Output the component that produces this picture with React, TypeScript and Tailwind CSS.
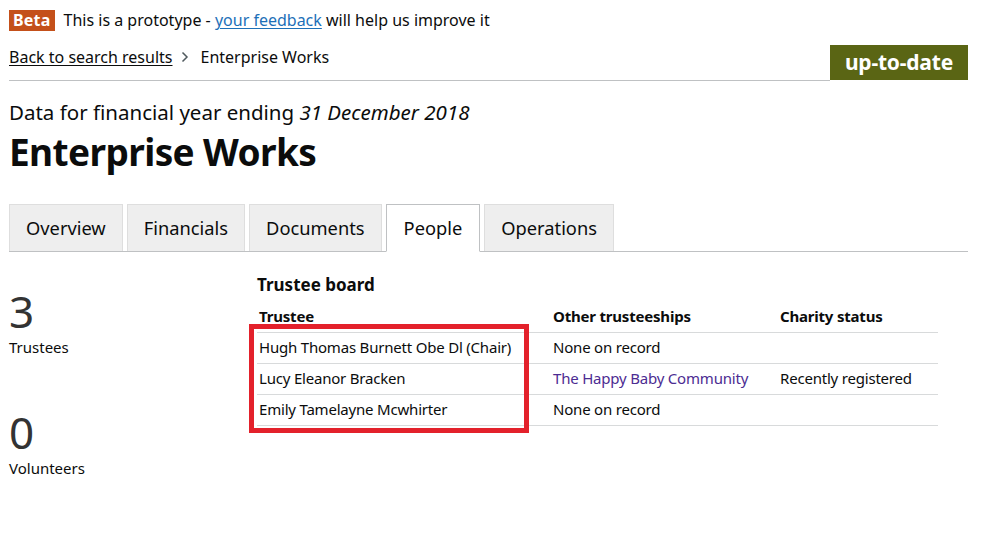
const font = { fontFamily: '"Noto Sans", "Liberation Sans", Arial, sans-serif' };

const TABS = ['Overview', 'Financials', 'Documents', 'People', 'Operations'];

const TRUSTEES = [
  { name: 'Hugh Thomas Burnett Obe Dl (Chair)', other: 'None on record', link: false, status: '' },
  { name: 'Lucy Eleanor Bracken', other: 'The Happy Baby Community', link: true, status: 'Recently registered' },
  { name: 'Emily Tamelayne Mcwhirter', other: 'None on record', link: false, status: '' },
];

export default function App() {
  return (
    <div className="w-[1001px] h-[546px] bg-white text-[#0b0c0c] overflow-hidden" style={font}>
      <div className="ml-[9px] w-[959px]">
        {/* Phase banner */}
        <div className="pt-[10px] flex items-center gap-[9px] text-[16px] leading-[21px]">
          <span className="bg-[#c4501a] text-white font-bold px-[4px] h-[21px] leading-[21px] tracking-[0.2px]">Beta</span>
          <span>
            This is a prototype -{' '}
            <a href="#" className="text-[#1d70b8] underline underline-offset-2">your feedback</a> will help us improve it
          </span>
        </div>

        {/* Breadcrumb + status */}
        <div className="flex items-end mt-[14px]">
          <div className="flex-1 border-b border-[#bfc1c3] pb-[11px] flex items-center text-[16px] leading-[24px]">
            <a href="#" className="underline underline-offset-2 text-[#0b0c0c]">Back to search results</a>
            <svg width="10" height="12" viewBox="0 0 10 12" className="ml-[7px] mr-[11px]">
              <path d="M2.5 1.5 L7 6 L2.5 10.5" stroke="#505a5f" strokeWidth="1.5" fill="none" />
            </svg>
            <span>Enterprise Works</span>
          </div>
          <div className="bg-[#5a6514] text-white font-bold text-[21px] leading-[35px] h-[35px] px-[15px] mb-[1px] tracking-[-0.2px]">
            up-to-date
          </div>
        </div>

        {/* Heading */}
        <p className="mt-[18px] text-[20.5px] leading-[26px]">
          Data for financial year ending <i>31 December 2018</i>
        </p>
        <h1 className="mt-[5px] text-[37px] leading-[44px] font-bold tracking-[-0.6px]">Enterprise Works</h1>

        {/* Tabs */}
        <div className="mt-[30px] flex border-b border-[#bfc1c3]">
          {TABS.map((t) => {
            const active = t === 'People';
            return (
              <div
                key={t}
                className={
                  active
                    ? 'h-[48px] -mb-px mr-[4px] px-[17px] flex items-center bg-white border border-[#bfc1c3] border-b-white text-[18.3px]'
                    : 'h-[47px] mr-[4px] px-[16px] flex items-center bg-[#eeeeee] border border-[#dedede] border-b-0 text-[18.3px]'
                }
              >
                {t}
              </div>
            );
          })}
        </div>

        {/* Content */}
        <div className="flex mt-[21px]">
          <div className="w-[248px] shrink-0 pt-[16px]">
            <div className="text-[44px] leading-[44px] text-[#333]">3</div>
            <div className="text-[15px] leading-[20px] mt-[4px]">Trustees</div>
            <div className="text-[44px] leading-[44px] text-[#333] mt-[53px]">0</div>
            <div className="text-[15px] leading-[20px] mt-[4px]">Volunteers</div>
          </div>

          <div className="relative w-[681px]">
            <h2 className="text-[17px] leading-[24px] font-bold">Trustee board</h2>
            <table className="w-full mt-[8px] text-[15px] tracking-[-0.2px] border-collapse">
              <thead>
                <tr className="border-b border-[#d8dadb]">
                  <th className="w-[294px] text-left font-bold pl-[2px] h-[26px] pb-[4px] align-bottom">Trustee</th>
                  <th className="w-[227px] text-left font-bold pl-[2px] h-[26px] pb-[4px] align-bottom">Other trusteeships</th>
                  <th className="text-left font-bold pl-[2px] h-[26px] pb-[4px] align-bottom">Charity status</th>
                </tr>
              </thead>
              <tbody>
                {TRUSTEES.map((r) => (
                  <tr key={r.name} className="border-b border-[#d8dadb]">
                    <td className="h-[31px] pl-[2px]">{r.name}</td>
                    <td className="h-[31px] pl-[2px]">
                      {r.link ? <a href="#" className="text-[#4c2c92]">{r.other}</a> : r.other}
                    </td>
                    <td className="h-[31px] pl-[2px]">{r.status}</td>
                  </tr>
                ))}
              </tbody>
            </table>
            <div className="absolute left-[-8px] top-[51px] w-[280px] h-[109px] border-[5px] border-[#e3212b] pointer-events-none" />
          </div>
        </div>
      </div>
    </div>
  );
}
